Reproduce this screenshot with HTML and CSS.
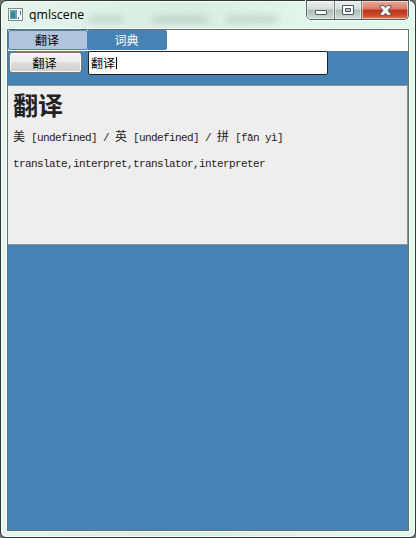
FILE: index.html
```html
<!DOCTYPE html>
<html lang="zh-CN">
<head>
<meta charset="utf-8">
<title>qmlscene</title>
<link rel="stylesheet" href="styles.css">
</head>
<body>
<div class="window">
  <header class="titlebar">
    <svg class="app-icon" width="15" height="13" viewBox="0 0 15 13">
      <rect x=".5" y=".5" width="14" height="12" fill="#fff" stroke="#85898c"/>
      <path d="M2 2h7v9H2z" fill="#5fa0c8"/>
      <path d="M3 4h4v6H3z" fill="#348d80"/>
      <path d="M10.500 9v2M12.500 3v4" stroke="#416fad"/>
    </svg>
    <span class="title">qmlscene</span>
    <span class="haze haze-a"></span><span class="haze haze-b"></span><span class="haze haze-c"></span>
    <div class="controls">
      <span class="control minimize"><svg width="12" height="6" viewBox="0 0 12 6"><rect x=".5" y=".5" width="11" height="4" rx=".5" fill="#fff" stroke="#50566b"/></svg></span>
      <span class="control maximize"><svg width="12" height="10" viewBox="0 0 12 10"><path fill-rule="evenodd" d="M.5.5h11v9H.5zM3.500 3.500v3h5v-3z" fill="#fff" stroke="#50566b"/></svg></span>
      <span class="control close"><svg width="13" height="11" viewBox="0 0 13 11"><path d="M1 .7h3.700l1.800 2 1.800-2H12v1.300L9 5.500 12 9v1.300H8.300l-1.800-2-1.800 2H1V9l3-3.500L1 2z" fill="#fff" stroke="#50566b"/></svg></span>
    </div>
  </header>
  <main class="client">
    <nav class="tabs">
      <span class="tab active">翻译</span>
      <span class="tab">词典</span>
    </nav>
    <div class="toolbar">
      <button class="go">翻译</button>
      <div class="field">翻译<i class="caret"></i></div>
    </div>
    <section class="result">
      <h1>翻译</h1>
      <p class="phonetic"><b>美</b> [undefined] / <b>英</b> [undefined] / <b>拼</b> [fān yì]</p>
      <p class="meaning">translate,interpret,translator,interpreter</p>
    </section>
  </main>
</div>
</body>
</html>
```
FILE: styles.css
```css
* { box-sizing: border-box; }
body { margin: 0; width: 416px; height: 538px; overflow: hidden; background: #747474; }
.window {
  width: 416px; height: 538px; padding: 0 6px 6px;
  border: 1px solid #303536; border-radius: 7px 7px 6px 6px;
  background: linear-gradient(90deg, #e4f5ed, #d8ede3 45%, #e2f5ea 75%, #e0f8ea);
  box-shadow: inset 0 0 0 1px #f8fffc;
  font-family: "Noto Sans", "Noto Sans CJK SC", sans-serif;
}
.titlebar { position: relative; height: 28px; display: flex; align-items: flex-start; padding: 7px 0 0 1px; }
.app-icon { flex: none; }
.title { margin: -2px 0 0 6px; font: 12.3px/17px "Open Sans", sans-serif; color: #000; }
.haze { position: absolute; top: 15px; height: 7px; border-radius: 4px; background: #8ea79d; opacity: .35; filter: blur(3px); }
.haze-a { left: 82px; width: 35px; }
.haze-b { left: 144px; width: 58px; }
.haze-c { left: 219px; width: 52px; }
.controls {
  position: absolute; right: 0; top: -1px; display: flex; width: 103px; height: 20px;
  border: 1px solid #555f63; border-top-color: #303536; border-radius: 0 0 5px 5px; overflow: hidden;
  box-shadow: 0 0 0 1px #f4fff9;
}
.control {
  display: flex; align-items: center; justify-content: center; width: 28px;
  background: linear-gradient(#e9efed 0, #d4ddda 45%, #aebab6 50%, #cddcd5 100%);
  box-shadow: inset 0 0 0 1px #ffffff80; border-right: 1px solid #6d7778;
}
.maximize { width: 27px; }
.minimize svg { margin-top: 5px; }
.close { flex: 1; border: 0; background: linear-gradient(#eba99b 0, #d77967 45%, #bd3217 50%, #c94b2b 80%, #dd8560 100%); }
.client { height: 502px; border: 1px solid #62706f; background: #4682b4; box-shadow: 0 0 0 1px #f5fffa; }
.tabs { display: flex; height: 21px; background: #fff; }
.tab {
  width: 80px; height: 20px; border: 1px solid #4682b4; border-radius: 2px;
  background: #4682b4; color: #fff; text-align: center;
  font: 12px/17px "Noto Sans CJK SC", sans-serif;
}
.tab.active { background: #b0c4de; color: #000; padding-right: 2px; }
.tab + .tab { margin-left: -1px; padding-right: 1px; }
.toolbar { display: flex; align-items: flex-start; height: 34px; }
.go {
  width: 73px; height: 21px; margin: 1px 6px 0 1px; padding: 0 2px 1px 0;
  border: 1px solid #777; border-radius: 3px;
  background: linear-gradient(#f3f3f3, #ebebeb 48%, #dcdcdc 52%, #cfcfcf);
  box-shadow: inset 0 0 0 1px #fafafa; color: #000;
  font: 12px/17px "Noto Sans CJK SC", sans-serif;
}
.field {
  display: flex; align-items: center; width: 240px; height: 24px; padding: 0 0 1px 2px;
  border: 1px solid #222; border-radius: 2px; background: #fff; color: #000;
  font: 12px/20px "Noto Sans CJK SC", sans-serif;
}
.caret { width: 1px; height: 12px; margin-left: 1px; background: #000; }
.result { height: 160px; border: 1px solid #8f9090; border-left: 0; background: #eee; padding: 4px 5px; color: #222; }
h1 { margin: 0; font: bold 25px/28px "Noto Sans CJK SC", sans-serif; }
p { margin: 0; white-space: pre; font: 11px/16px "Liberation Mono", "Noto Sans CJK SC", monospace; letter-spacing: -.6px; }
p b { font: 12px/16px "Noto Sans CJK SC", sans-serif; letter-spacing: 0; }
.phonetic { margin-top: 10px; }
.meaning { margin-top: 10px; }
```
